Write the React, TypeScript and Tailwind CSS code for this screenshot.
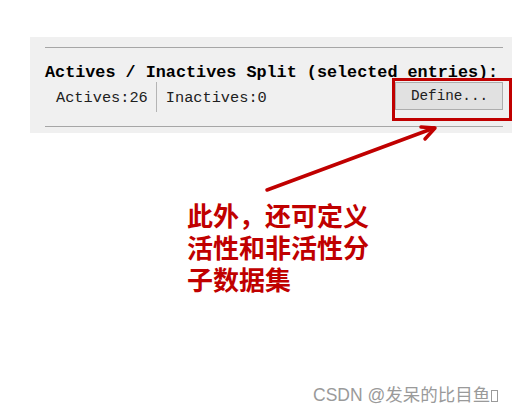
const mono = { fontFamily: '"Liberation Mono", "DejaVu Sans Mono", monospace' };

function SplitPanel() {
  return (
    <div className="ml-[30px] mt-[37px] w-[482px] h-[96px] bg-[#f0f0f0] pt-[10px] pl-[15px] pr-[9px]">
      <div className="h-px bg-[#a6a6a6]" />
      <div className="mt-[16px] h-[18px] leading-[18px] text-[16.8px] font-bold text-black whitespace-nowrap" style={mono}>
        Actives / Inactives Split (selected entries):
      </div>
      <div className="flex items-center h-[30px] text-[15.3px] text-[#202020] whitespace-nowrap" style={mono}>
        <span className="ml-[11px] mt-[3px]">Actives:26</span>
        <div className="ml-[8px] w-px h-[30px] bg-[#b4b4b4]" />
        <span className="ml-[9px] mt-[3px]">Inactives:0</span>
        <button className="ml-auto mb-[2px] w-[108px] h-[28px] bg-[#e1e1e1] border border-[#adadad] text-[14.3px] text-[#202020] flex items-center justify-center pl-[1px] pt-[2px]" style={mono}>
          Define...
        </button>
      </div>
      <div className="mt-[14px] h-px bg-[#a6a6a6]" />
    </div>
  );
}

export default function App() {
  return (
    <div className="relative w-[526px] h-[415px] bg-white overflow-hidden">
      <SplitPanel />

      {/* red highlight box around Define... */}
      <div className="absolute left-[392px] top-[78px] w-[120px] h-[43px] border-[3px] border-[#c00000]" />

      {/* arrow */}
      <svg className="absolute left-0 top-0" width="526" height="415" viewBox="0 0 526 415">
        <g stroke="#c00000" strokeWidth="3.5" strokeLinecap="round" strokeLinejoin="round" fill="none">
          <line x1="267" y1="190" x2="434" y2="128" />
          <polyline points="421,127 435,128 425,139" />
        </g>
      </svg>

      <p
        className="ml-[187px] mt-[66px] text-[26px] leading-[32px] font-bold text-[#c00000]"
        style={{ fontFamily: '"Noto Sans CJK SC", "Noto Sans", sans-serif' }}
      >
        此外，还可定义
        <br />
        活性和非活性分
        <br />
        子数据集
      </p>

      <div
        className="absolute left-[313px] top-[382px] text-[17.5px] text-[#9a9a9a] whitespace-nowrap"
        style={{ fontFamily: '"Liberation Sans", "Noto Sans CJK SC", sans-serif' }}
      >
        CSDN @发呆的比目鱼<span className="inline-block ml-[1px] w-[7px] h-[12px] border border-[#9a9a9a] align-[-1px]" />
      </div>
    </div>
  );
}
